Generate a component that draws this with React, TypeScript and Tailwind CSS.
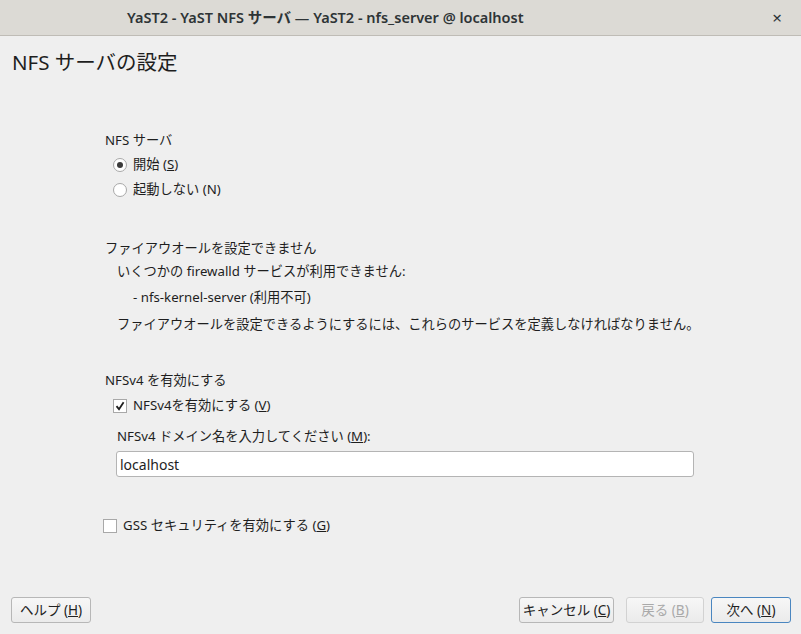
import React from 'react';

const font = { fontFamily: '"Noto Sans", "Noto Sans CJK JP", sans-serif' };

const Radio: React.FC<{ checked?: boolean }> = ({ checked }) => (
  <span className="flex h-[14px] w-[14px] shrink-0 items-center justify-center rounded-full border border-[#a8a8a8] bg-white">
    {checked && <span className="h-[6px] w-[6px] rounded-full bg-[#3c3c3c]" />}
  </span>
);

const Check: React.FC<{ checked?: boolean }> = ({ checked }) => (
  <span className="flex h-[14px] w-[14px] shrink-0 items-center justify-center border border-[#a8a8a8] bg-white">
    {checked && (
      <svg width="10" height="10" viewBox="0 0 10 10">
        <path d="M1.5 5.2 L4 8.2 L8.6 1.2" fill="none" stroke="#1e1e1e" strokeWidth="1.8" />
      </svg>
    )}
  </span>
);

const Btn: React.FC<{ label: string; mn: string; w: string; disabled?: boolean; primary?: boolean }> = ({
  label,
  mn,
  w,
  disabled,
  primary,
}) => (
  <button
    className={`flex h-[26px] ${w} items-center justify-center rounded-[3px] border bg-gradient-to-b from-[#f7f7f7] to-[#ebebeb] text-[13.5px] ${
      disabled ? 'border-[#d2d2d2] text-[#a9a9a9]' : primary ? 'border-[#4a86c0] text-[#222]' : 'border-[#b7b7b7] text-[#222]'
    }`}
  >
    {label} (<span className="underline">{mn}</span>)
  </button>
);

export default function App() {
  return (
    <div className="flex h-[634px] w-[801px] flex-col bg-[#efefef] text-[13.25px] text-[#1e1e1e]" style={font}>
      {/* Title bar */}
      <div className="flex h-[36px] shrink-0 items-center border-b border-[#bfbcb6] bg-[#dcdad5] pl-[127px] pr-[19px]">
        <span className="text-[14.5px] font-semibold text-[#2e3436]">YaST2 - YaST NFS サーバ — YaST2 - nfs_server @ localhost</span>
        <span className="ml-auto text-[17px] text-[#2e3436]">×</span>
      </div>

      <div className="mt-[14px] flex h-[24px] items-center pl-[12px] text-[20.5px]">NFS サーバの設定</div>

      <div className="flex flex-col pl-[105px]">
        <div className="mt-[57px] flex h-[20px] items-center">NFS サーバ</div>
        <div className="mt-[4px] flex h-[20px] items-center gap-[6px] pl-[8px]">
          <Radio checked />
          <span>
            開始 (<span className="underline">S</span>)
          </span>
        </div>
        <div className="mt-[5px] flex h-[20px] items-center gap-[6px] pl-[8px]">
          <Radio />
          <span>起動しない (N)</span>
        </div>

        <div className="mt-[39px] flex h-[20px] items-center">ファイアウオールを設定できません</div>
        <div className="mt-[3px] flex h-[20px] items-center pl-[12px]">いくつかの firewalld サービスが利用できません:</div>
        <div className="mt-[6px] flex h-[20px] items-center pl-[28px]">- nfs-kernel-server (利用不可)</div>
        <div className="mt-[7px] flex h-[20px] items-center pl-[12px]">
          ファイアウオールを設定できるようにするには、これらのサービスを定義しなければなりません。
        </div>

        <div className="mt-[36px] flex h-[20px] items-center">NFSv4 を有効にする</div>
        <div className="mt-[5px] flex h-[20px] items-center gap-[6px] pl-[8px]">
          <Check checked />
          <span>
            NFSv4を有効にする (<span className="underline">V</span>)
          </span>
        </div>
        <div className="mt-[11px] flex h-[20px] items-center pl-[12px]">
          NFSv4 ドメイン名を入力してください (<span className="underline">M</span>):
        </div>
        <div className="mt-[4px] pl-[11px]">
          <div className="flex h-[26px] w-[578px] items-center rounded-[3px] border border-[#b4b4b4] bg-white pl-[3px] text-[14px]">
            localhost
          </div>
        </div>

        <div className="mt-[39px] flex h-[20px] items-center gap-[6px]">
          <span className="-ml-[2px]">
            <Check />
          </span>
          <span>
            GSS セキュリティを有効にする (<span className="underline">G</span>)
          </span>
        </div>
      </div>

      {/* Buttons */}
      <div className="mt-auto mb-[11px] flex items-center pl-[11px] pr-[10px]">
        <Btn label="ヘルプ" mn="H" w="w-[80px]" />
        <div className="ml-auto flex items-center">
          <Btn label="キャンセル" mn="C" w="w-[95px]" />
          <div className="ml-[12px]">
            <Btn label="戻る" mn="B" w="w-[78px]" disabled />
          </div>
          <div className="ml-[7px]">
            <Btn label="次へ" mn="N" w="w-[80px]" primary />
          </div>
        </div>
      </div>
    </div>
  );
}
